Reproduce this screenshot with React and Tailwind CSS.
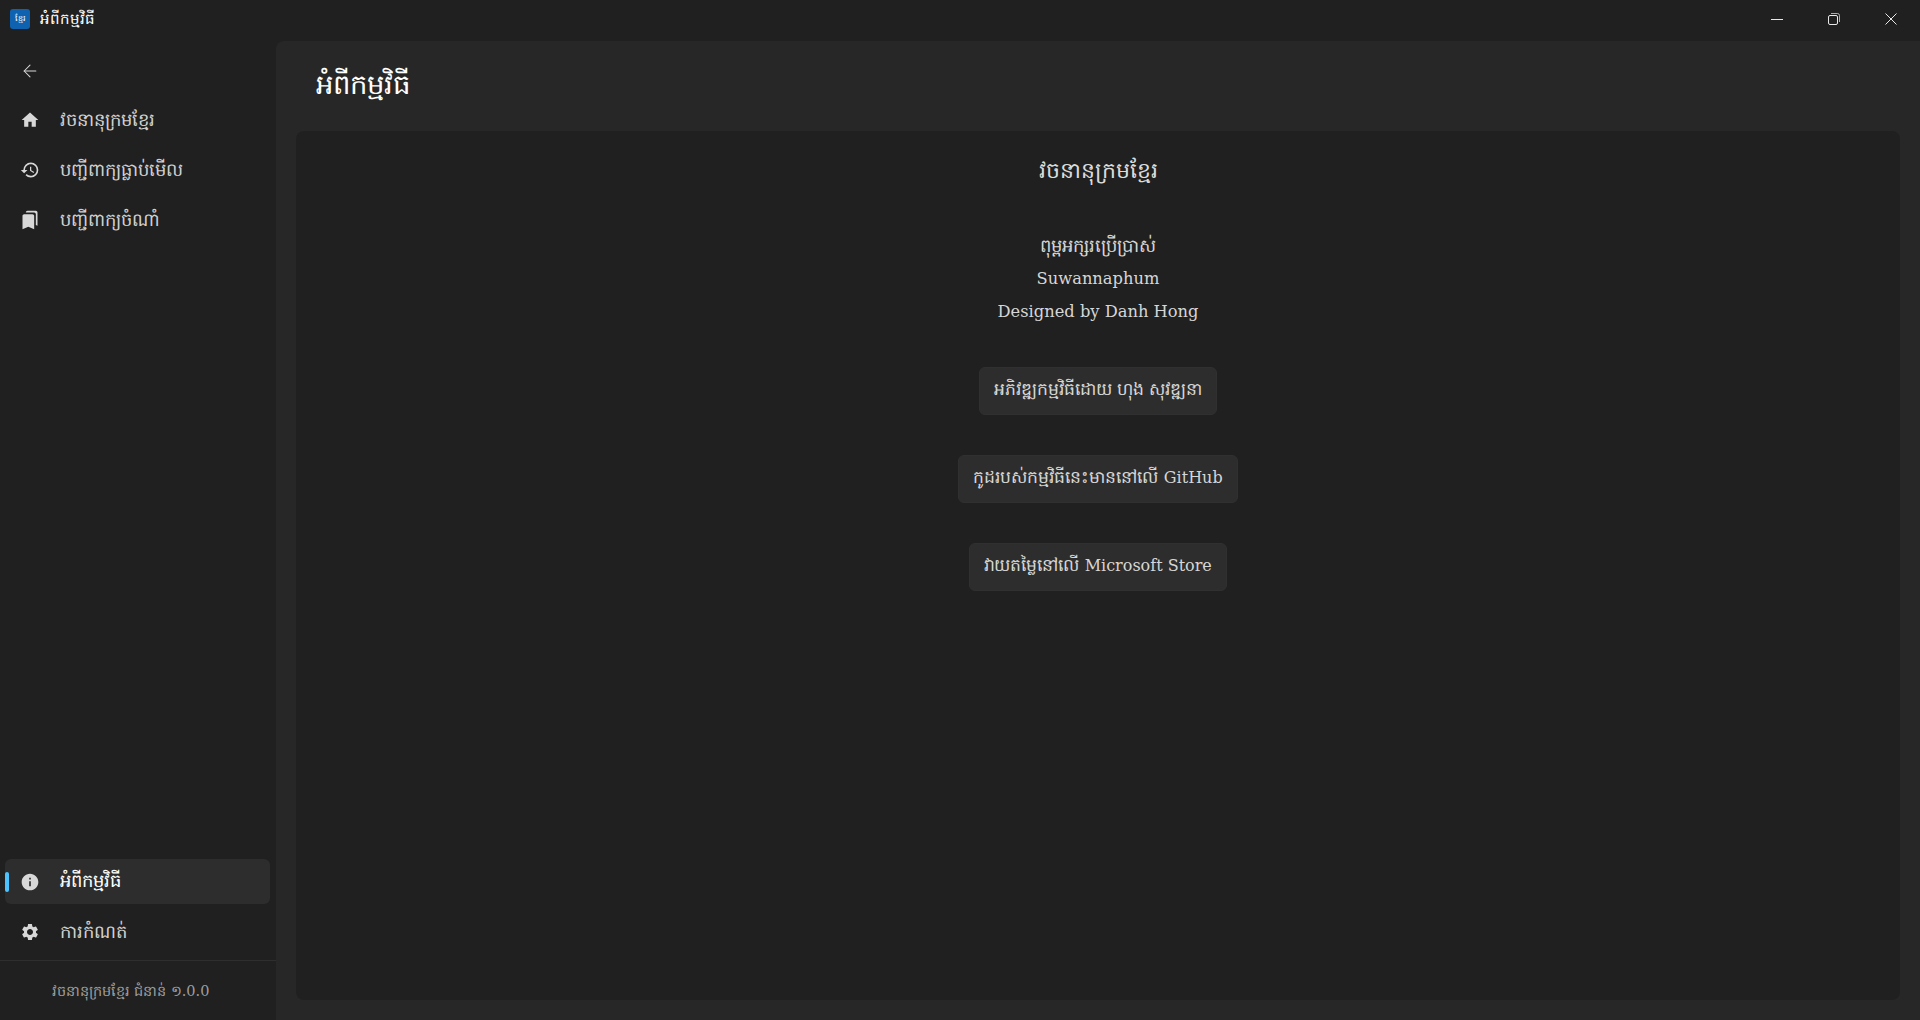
import { ArrowLeft } from "lucide-react";
import { MdHome, MdHistory, MdBookmarks, MdInfo, MdSettings } from "react-icons/md";

function NavItem({ icon: Icon, label, active }) {
  return (
    <div
      className={`relative ml-[5px] mr-[6px] flex h-[45px] items-center rounded-md ${
        active ? "bg-[#2d2d2d] text-white" : "text-[#d0d0d0]"
      }`}
    >
      {active && <span className="absolute left-0 top-[13px] h-[20px] w-[4px] rounded-full bg-[#4cc2ff]" />}
      <span className="flex w-[50px] justify-center">
        <Icon size={20} className="text-[#d8d8d8]" />
      </span>
      <span className={`ml-[5px] text-[18px] leading-none ${active ? "mb-[1px]" : ""}`}>{label}</span>
    </div>
  );
}

function LinkButton({ children }) {
  return (
    <button className="flex h-[48px] items-center rounded-md border border-[#303030] bg-[#2d2d2d] px-[14px] pb-[2px] text-[17.2px] text-[#d6d6d6]">
      <span>{children}</span>
    </button>
  );
}

function Latin({ children, size = "text-[16.3px]" }) {
  return <span className={size}>{children}</span>;
}

export default function App() {
  return (
    <div className="flex h-screen w-full flex-col overflow-hidden bg-[#202020] font-['DejaVu_Serif',serif]">
      <header className="flex h-[41px] shrink-0 items-start justify-between">
        <div className="flex items-center pl-[10px] pt-[9px]">
          <div className="flex h-[20px] w-[20px] items-center justify-center rounded-[3px] bg-[#0f62b0] text-[8px] text-white">
            ខ្មែរ
          </div>
          <span className="ml-[10px] text-[15px] leading-[20px] text-white">អំពីកម្មវិធី</span>
        </div>
        <div className="mr-[1px] flex">
          <button className="flex h-[38px] w-[57px] items-center justify-center">
            <svg width="12" height="12" viewBox="0 0 12 12" stroke="#e8e8e8" fill="none">
              <path d="M0 6.5h12" />
            </svg>
          </button>
          <button className="flex h-[38px] w-[57px] items-center justify-center">
            <svg width="12" height="12" viewBox="0 0 12 12" stroke="#e8e8e8" fill="none">
              <rect x="0.5" y="2.5" width="9" height="9" rx="1.5" />
              <path d="M3 .5h6.5a2 2 0 0 1 2 2V9" strokeOpacity="0.7" />
            </svg>
          </button>
          <button className="flex h-[38px] w-[57px] items-center justify-center">
            <svg width="12" height="12" viewBox="0 0 12 12" stroke="#e8e8e8" fill="none">
              <path d="M.5.5l11 11M11.5.5l-11 11" />
            </svg>
          </button>
        </div>
      </header>

      <div className="flex min-h-0 flex-1">
        <aside className="flex w-[276px] shrink-0 flex-col">
          <button className="ml-[5px] mt-[7px] flex h-[45px] w-[50px] shrink-0 items-center justify-center text-[#d8d8d8]">
            <ArrowLeft size={20} strokeWidth={1.25} />
          </button>
          <nav className="mt-[4px] flex flex-col gap-[5px]">
            <NavItem icon={MdHome} label="វចនានុក្រមខ្មែរ" />
            <NavItem icon={MdHistory} label="បញ្ជីពាក្យធ្លាប់មើល" />
            <NavItem icon={MdBookmarks} label="បញ្ជីពាក្យចំណាំ" />
          </nav>
          <div className="mt-auto flex flex-col gap-[5px]">
            <NavItem icon={MdInfo} label="អំពីកម្មវិធី" active />
            <NavItem icon={MdSettings} label="ការកំណត់" />
          </div>
          <div className="mt-[6px] flex h-[60px] items-center justify-center border-t border-[#2e2e2e] pr-[15px] pt-[2px] text-[14.5px] text-[#9d9d9d]">
            វចនានុក្រមខ្មែរ ជំនាន់ ១.0.0
          </div>
        </aside>

        <main className="flex min-w-0 flex-1 flex-col rounded-tl-lg bg-[#272727] pb-[20px]">
          <h1 className="flex h-[90px] shrink-0 items-center pb-[3px] pl-[40px] text-[27.5px] font-normal text-white">
            អំពីកម្មវិធី
          </h1>
          <section className="mx-[20px] flex flex-1 flex-col items-center rounded-lg bg-[#202020]">
            <h2 className="mt-[24px] text-[22px] leading-[32px] text-[#dcdcdc]">វចនានុក្រមខ្មែរ</h2>
            <div className="mt-[43px] text-center text-[18px] leading-[32px] text-[#d6d6d6]">
              <p>ពុម្ពអក្សរប្រើប្រាស់</p>
              <p><Latin>Suwannaphum</Latin></p>
              <p><Latin>Designed by Danh Hong</Latin></p>
            </div>
            <div className="mt-[39px] flex flex-col items-center gap-[40px]">
              <LinkButton>អភិវឌ្ឍកម្មវិធីដោយ ហុង សុវឌ្ឍនា</LinkButton>
              <LinkButton>កូដរបស់កម្មវិធីនេះមាននៅលើ <Latin size="text-[16px]">GitHub</Latin></LinkButton>
              <LinkButton>វាយតម្លៃនៅលើ <Latin size="text-[16px]">Microsoft Store</Latin></LinkButton>
            </div>
          </section>
        </main>
      </div>
    </div>
  );
}
